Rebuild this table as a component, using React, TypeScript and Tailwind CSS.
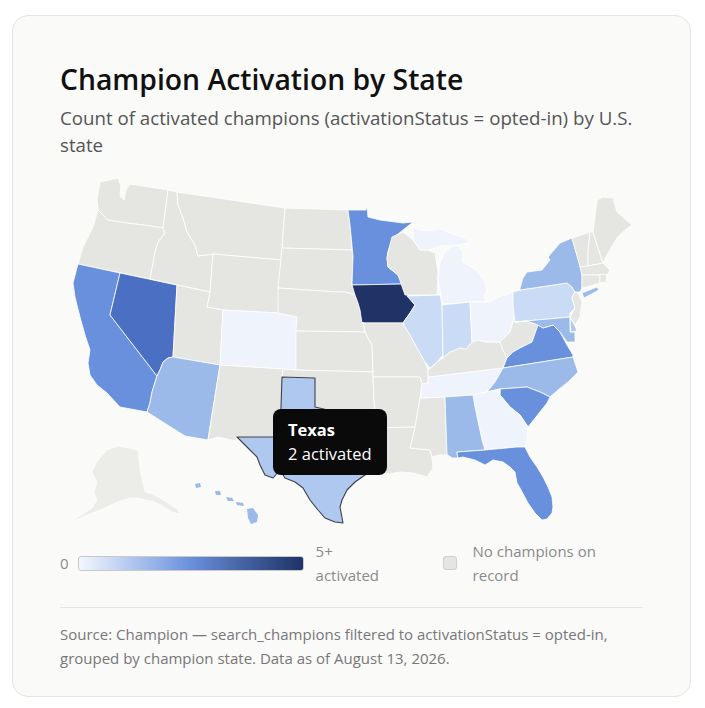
import React from "react";

const G = "#e5e5e1";
const L0 = "#eef3fc";
const L1 = "#c9dbf5";
const L2 = "#afc8f0";
const L3 = "#9bbaea";
const L4 = "#6890dc";
const L5 = "#4a6fc3";
const L6 = "#1f3366";

type S = { id: string; p: string; f: string };

const states: S[] = [
  { id: "WA", f: G, p: "100,182 118,178 121,186 120,196 124,200 126,190 130,184 168,190 163,228 143,225 127,223 108,220 98,210 97,200" },
  { id: "OR", f: G, p: "98,210 108,220 127,223 143,225 163,228 165,233 158,242 155,252 150,279 78,264 83,247 93,227" },
  { id: "CA", f: L4, p: "78,264 120,273 110,315 157,376 152,392 150,403 147,412 120,407 107,393 97,385 90,375 88,363 90,350 85,335 80,317 75,297 73,283" },
  { id: "NV", f: L5, p: "120,273 177,285 173,357 168,358 163,362 160,370 157,376 110,315" },
  { id: "ID", f: G, p: "168,190 177,192 178,205 183,218 187,232 195,245 198,256 213,254 210,292 150,279 155,252 158,242 165,233 163,228" },
  { id: "MT", f: G, p: "177,192 285,208 282,248 281,260 213,254 198,256 195,245 187,232 183,218 178,205" },
  { id: "WY", f: G, p: "213,254 281,260 278,313 223,310 207,307 210,292" },
  { id: "UT", f: G, p: "177,285 210,292 207,307 223,310 220,365 173,357" },
  { id: "CO", f: L0, p: "223,310 278,313 297,317 296,370 220,365" },
  { id: "AZ", f: L3, p: "173,357 220,365 208,440 185,436 147,412 150,403 152,392 157,376 160,370 163,362 168,358" },
  { id: "NM", f: G, p: "220,365 283,369 282,377 280,437 237,437 236,441 218,437 208,440" },
  { id: "ND", f: G, p: "285,208 348,210 350,225 352,250 282,248" },
  { id: "SD", f: G, p: "282,248 352,250 353,256 352,285 355,295 345,292 337,292 278,288" },
  { id: "NE", f: G, p: "278,288 337,292 345,292 355,295 358,303 360,310 363,322 365,332 296,331 297,317 278,313" },
  { id: "KS", f: G, p: "296,331 365,332 368,338 372,345 373,372 296,370" },
  { id: "OK", f: G, p: "283,369 296,370 373,372 373,378 375,418 365,415 352,413 340,412 328,410 315,407 315,378 282,377" },
  { id: "MN", f: L4, p: "348,210 366,210 367,206 368,217 380,220 403,223 413,222 393,238 388,252 387,258 388,267 398,275 403,284 352,285 353,256 350,225" },
  { id: "IA", f: L6, p: "352,285 403,284 407,295 415,305 410,313 405,320 403,323 362,323 360,310 358,303 355,295" },
  { id: "MO", f: G, p: "362,323 403,323 405,327 410,335 417,348 425,362 428,370 428,383 422,384 420,377 373,377 373,372 372,345 368,338 365,332 363,322" },
  { id: "AR", f: G, p: "373,377 420,377 422,384 421,392 420,398 418,410 415,427 375,428 375,418 373,378" },
  { id: "LA", f: G, p: "375,428 415,427 413,437 410,448 430,450 432,458 433,468 427,477 413,473 400,472 390,474 383,473 373,470 377,457 377,445" },
  { id: "MS", f: G, p: "421,398 445,397 447,455 440,455 432,457 430,450 410,448 413,437 415,427 418,410 420,398" },
  { id: "TN", f: L0, p: "428,377 503,368 495,382 487,392 473,395 445,397 421,398 421,392 422,384 428,383" },
  { id: "KY", f: G, p: "428,370 433,366 437,362 443,358 450,352 460,348 466,349 472,342 478,340 487,342 500,342 503,350 507,358 503,368 428,377" },
  { id: "WI", f: G, p: "392,237 403,232 413,240 420,250 428,250 435,253 438,272 437,295 405,295 398,275 388,267 387,258 388,252" },
  { id: "MIU", f: L0, p: "413,228 425,231 440,229 455,235 465,238 470,243 455,245 440,246 428,250 420,250 413,240" },
  { id: "MI", f: L0, p: "440,262 445,252 452,246 458,246 463,252 462,262 468,265 474,268 480,275 485,282 487,292 484,297 487,301 470,302 443,304 440,290 438,278" },
  { id: "IL", f: L1, p: "407,296 440,295 442,305 443,355 437,362 430,368 425,362 417,348 410,335 405,327 403,323 405,320 410,313 415,305" },
  { id: "IN", f: L1, p: "442,305 470,302 472,342 466,349 460,348 450,352 443,358 443,355" },
  { id: "OH", f: L0, p: "470,302 490,302 497,298 513,292 513,305 515,315 510,332 500,342 487,342 478,340 472,342" },
  { id: "WV", f: G, p: "513,305 515,322 527,321 538,325 532,342 520,348 513,352 507,358 503,350 500,342 510,332 515,315" },
  { id: "VA", f: L4, p: "503,368 507,358 513,352 520,348 532,342 538,325 543,328 553,325 560,332 567,345 573,355 573,357" },
  { id: "NC", f: L3, p: "503,368 573,357 578,372 568,382 558,390 550,397 540,392 527,387 500,389 487,392 495,382" },
  { id: "SC", f: L4, p: "500,389 527,387 540,392 550,397 547,403 528,427 520,415 510,407 500,395" },
  { id: "GA", f: L0, p: "473,395 487,392 500,389 500,395 510,407 520,415 528,427 527,440 525,447 517,447 485,450 482,440 475,407" },
  { id: "AL", f: L3, p: "445,397 473,395 475,407 482,440 485,450 457,452 458,458 452,458 448,455 447,455" },
  { id: "FL", f: L4, p: "457,452 485,450 517,447 525,447 530,457 537,467 543,477 548,487 552,497 553,507 552,513 547,519 542,520 535,513 528,503 520,488 517,483 515,472 510,467 503,462 493,460 485,465 475,460 463,457 458,458" },
  { id: "PA", f: L1, p: "513,292 520,290 567,283 572,287 575,292 572,298 575,308 570,313 570,317 515,322 513,305" },
  { id: "MD", f: L3, p: "515,322 570,317 570,332 575,332 575,342 567,342 560,332 553,325 543,328 538,325 527,321" },
  { id: "DE", f: L2, p: "570,318 574,324 577,331 571,332" },
  { id: "NJ", f: G, p: "575,292 578,293 582,302 580,317 575,325 570,317 575,308 572,298" },
  { id: "NY", f: L3, p: "520,290 520,288 523,278 527,272 542,270 550,260 548,257 560,243 572,238 576,252 580,265 582,275 582,288 580,292 575,292 572,287 567,283" },
  { id: "LI", f: L3, p: "582,293 597,287 599,290 584,298" },
  { id: "VT", f: G, p: "572,238 590,232 588,252 588,266 580,267 576,252" },
  { id: "NH", f: G, p: "590,232 593,232 597,245 603,263 588,266 588,252" },
  { id: "ME", f: G, p: "593,232 597,200 603,197 613,198 617,212 632,225 625,230 617,238 607,255 603,263 597,245" },
  { id: "MA", f: G, p: "580,267 588,266 603,263 610,270 607,275 582,275" },
  { id: "CT", f: G, p: "582,275 600,275 600,283 583,288 582,288" },
  { id: "RI", f: G, p: "600,274 607,275 606,282 600,283" },
];

const TX =
  "282,377 315,378 315,407 328,410 340,412 352,413 365,415 375,418 375,428 377,445 377,457 373,470 365,475 355,482 347,490 342,500 340,507 343,523 335,522 325,518 318,510 310,500 303,488 295,482 285,478 280,470 273,478 265,475 260,465 257,457 248,448 237,437 280,437";

const AK =
  "107,450 118,446 128,448 138,450 140,470 145,492 152,494 160,498 168,503 178,510 180,514 172,512 163,506 152,501 145,500 138,498 130,498 123,500 115,503 105,508 95,512 85,516 75,520 68,523 78,517 92,508 97,500 94,492 97,482 92,472 96,463 101,457";

const HI = [
  "195,484 200,483 201,487 196,488",
  "215,491 220,491 221,495 216,495",
  "226,497 232,498 234,501 228,501",
  "236,502 243,503 244,506 237,505",
  "247,509 253,508 258,515 257,522 251,524 248,518",
];

export default function App() {
  return (
    <div className="min-h-screen bg-white pt-[15px] pl-[12px]" style={{ fontFamily: '"Open Sans", "Noto Sans", sans-serif' }}>
      <div className="w-[679px] rounded-[16px] border border-[#e7e5e4] bg-[#fafaf9] px-[47px] pt-[46px] pb-[26px]">
        <h1 className="text-[28.3px] leading-[34px] font-semibold text-[#111111]">Champion Activation by State</h1>
        <p className="mt-[8px] text-[18.7px] leading-[27px] text-[#555555]">
          Count of activated champions (activationStatus = opted-in) by U.S. state
        </p>
        <div className="relative mt-[10px] h-[365px] w-[583px]">
          <svg width="583" height="365" viewBox="60 168 583 365" className="block">
            <polygon points={AK} fill={G} fillOpacity={0.7} stroke="#ffffff" strokeWidth={0.6} />
            {HI.map((p, i) => (
              <polygon key={i} points={p} fill={L3} />
            ))}
            {states.map((s) => (
              <polygon key={s.id} points={s.p} fill={s.f} stroke="#ffffff" strokeWidth={0.8} strokeLinejoin="round" />
            ))}
            <polygon points={TX} fill={L2} stroke="#3f3f46" strokeWidth={1.1} strokeLinejoin="round" />
          </svg>
          <div className="absolute left-[213px] top-[241px] rounded-[8px] bg-[#0a0a0a] px-[15px] py-[9px] text-white">
            <div className="text-[16.5px] leading-[24px] font-bold">Texas</div>
            <div className="text-[16.5px] leading-[24px] whitespace-nowrap">2 activated</div>
          </div>
        </div>
        <div className="mt-[6px] flex items-center text-[15px] leading-[24px] text-[#8a8a8a]">
          <span>0</span>
          <div className="ml-[9px] h-[15px] w-[226px] rounded-[3px] border border-[#c9c9c9] bg-gradient-to-r from-[#f4f7fd] via-[#6a90dc] to-[#1f3366]" />
          <span className="ml-[12px] w-[80px]">5+ activated</span>
          <div className="ml-[47px] h-[14px] w-[14px] rounded-[3px] border border-[#cfcfcf] bg-[#e5e5e1]" />
          <span className="ml-[16px] w-[140px]">No champions on record</span>
        </div>
        <div className="mt-[20px] border-t border-[#e5e5e5]" />
        <p className="mt-[14px] text-[15px] leading-[24px] text-[#777777]">
          Source: Champion — search_champions filtered to activationStatus = opted-in, grouped by champion state. Data as of August 13, 2026.
        </p>
      </div>
    </div>
  );
}
